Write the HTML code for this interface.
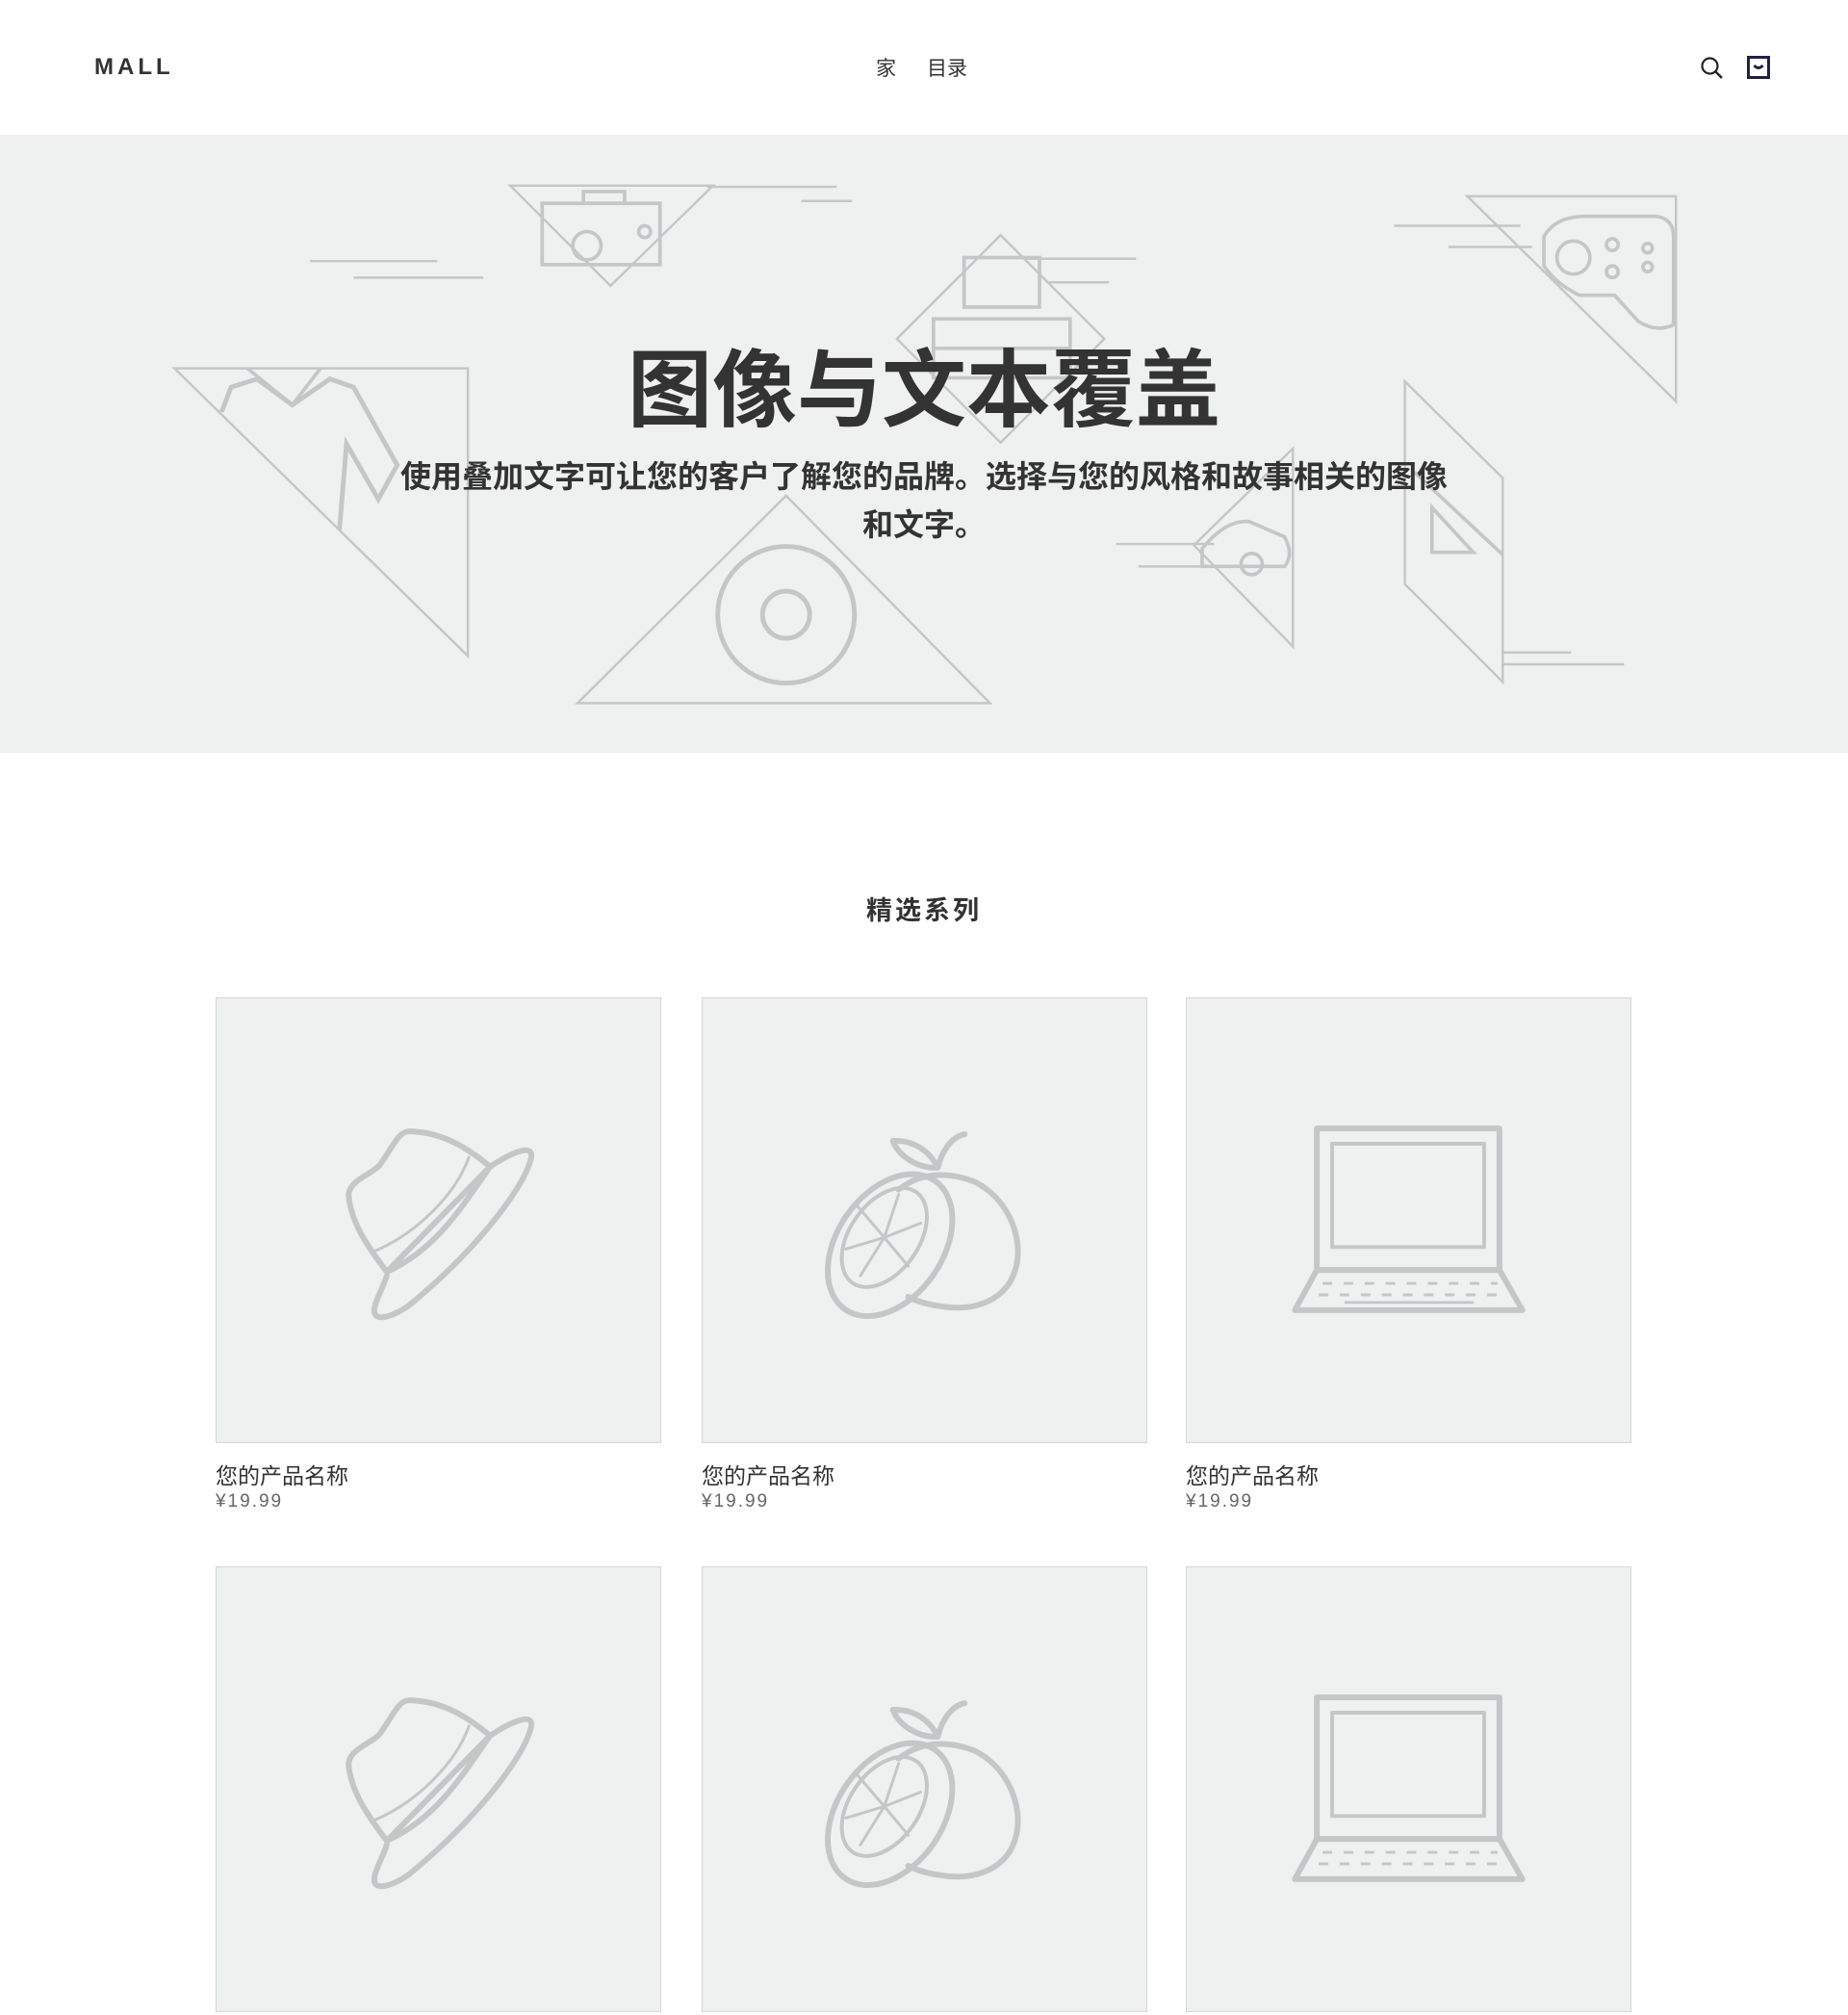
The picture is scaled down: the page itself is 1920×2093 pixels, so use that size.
<!DOCTYPE html>
<html><head><meta charset="utf-8"><style>
*{margin:0;padding:0;box-sizing:border-box}
body{width:1920px;height:1920px;overflow:hidden;background:#fff;font-family:"Liberation Sans","Noto Sans CJK SC",sans-serif;color:#333}
.hdr{height:140px;position:relative}
.logo{position:absolute;left:98px;top:56px;font-size:24px;font-weight:bold;letter-spacing:4px;color:#333}
.nav{position:absolute;left:910px;top:55px;font-size:21px;color:#333}
.nav span{margin-right:32px}
.hero{position:absolute;top:140px;left:0;width:1920px;height:642px;background:#eff0f0}
.hero svg{position:absolute;left:0;top:0}
.ttl{position:absolute;left:0;width:1920px;text-align:center;font-size:88px;font-weight:bold;color:#333;line-height:120px}
.sub{position:absolute;left:410px;width:1100px;text-align:center;font-size:32px;font-weight:bold;color:#333;line-height:50px}
.sec{position:absolute;top:924px;width:1920px;text-align:center;font-size:27px;font-weight:bold;letter-spacing:3px;color:#333}
.card{position:absolute;width:463px}
.img{width:463px;height:463px;background:#eff0f0;border:1.5px solid #d5d6d7}
.nm{font-size:23px;color:#333;margin-top:19px;line-height:30px}
.pr{font-size:19px;color:#666;letter-spacing:2px;line-height:24px}
</style></head><body>
<div class="hdr">
<div class="logo">MALL</div>
<div class="nav"><span>家</span><span>目录</span></div>
<svg style="position:absolute;left:1766px;top:58px" width="26" height="26" viewBox="0 0 26 26"><circle cx="10.5" cy="10.5" r="8" fill="none" stroke="#222" stroke-width="2.2"/><line x1="16.5" y1="16.5" x2="23" y2="23" stroke="#222" stroke-width="2.4"/></svg>
<svg style="position:absolute;left:1815px;top:58px" width="24" height="24" viewBox="0 0 24 24"><rect x="1.5" y="1.5" width="21" height="21" fill="none" stroke="#1c2340" stroke-width="3"/><path d="M7.5 10 Q12 15 16.5 10" fill="none" stroke="#1c2340" stroke-width="3"/></svg>
</div>
<div class="hero">
<svg width="1920" height="642" viewBox="0 114 1568 524" fill="none" stroke="#c5c6c8" stroke-width="2">
<polygon points="433,157 605,157 518,242"/>
<line x1="600" y1="158" x2="710" y2="158"/><line x1="680" y1="170" x2="723" y2="170"/>
<rect x="460" y="172" width="100" height="52" stroke-width="3"/><rect x="495" y="162" width="35" height="10" stroke-width="3"/>
<circle cx="498" cy="208" r="12" stroke-width="3"/><circle cx="547" cy="196" r="5" stroke-width="3"/>
<line x1="263" y1="221" x2="371" y2="221"/><line x1="300" y1="235" x2="410" y2="235"/>
<polygon points="849,199 937,287 849,375 761,287"/>
<line x1="870" y1="219" x2="964" y2="219"/><line x1="890" y1="239" x2="941" y2="239"/>
<rect x="818" y="218" width="64" height="42" stroke-width="3"/><rect x="792" y="270" width="116" height="50" stroke-width="3"/><line x1="792" y1="295" x2="908" y2="295" stroke-width="3"/>
<polygon points="148,312 397,312 397,556"/>
<path d="M188,349 L196,328 L218,321 L248,343 L280,321 L300,328 L337,394 L321,423 L294,376 L288,449" stroke-width="4"/>
<path d="M210,312 L248,343 L272,312" stroke-width="3"/>
<polygon points="1245,166 1422,166 1422,340"/>
<line x1="1183" y1="191" x2="1290" y2="191"/><line x1="1229" y1="209" x2="1300" y2="209"/>
<path d="M1310,200 Q1320,183 1345,183 L1405,183 Q1420,185 1420,200 L1420,275 Q1405,282 1390,272 L1370,250 L1340,250 Q1320,240 1310,225 Z" stroke-width="3"/>
<circle cx="1335" cy="218" r="14" stroke-width="3"/><circle cx="1368" cy="207" r="5" stroke-width="3"/><circle cx="1368" cy="230" r="5" stroke-width="3"/><circle cx="1398" cy="210" r="4" stroke-width="3"/><circle cx="1398" cy="226" r="4" stroke-width="3"/>
<polygon points="667,420 840,596 490,596"/>
<circle cx="667" cy="521" r="58" stroke-width="4"/><circle cx="667" cy="521" r="20" stroke-width="4"/>
<polygon points="1097,380 1097,548 1013,462"/>
<line x1="947" y1="461" x2="1030" y2="461"/><line x1="966" y1="480" x2="1040" y2="480"/>
<path d="M1020,465 Q1040,440 1060,442 L1090,455 Q1098,470 1090,480 L1020,480 Z" stroke-width="3"/><circle cx="1062" cy="478" r="9" stroke-width="3"/>
<polygon points="1192,323 1275,405 1275,578 1192,495"/>
<line x1="1275" y1="553" x2="1333" y2="553"/><line x1="1275" y1="563" x2="1378" y2="563"/>
<path d="M1200,400 L1275,470 M1215,430 L1250,468 L1215,468 Z" stroke-width="3"/>
</svg>
<div class="ttl" style="top:206px">图像与文本覆盖</div>
<div class="sub" style="top:330px">使用叠加文字可让您的客户了解您的品牌。选择与您的风格和故事相关的图像和文字。</div>
</div>
<div class="sec">精选系列</div>

<div class="card" style="left:224px;top:1036px"><div class="img">
<svg width="460" height="460" viewBox="0 0 463 463" fill="none" stroke="#c5c6c8" stroke-width="6" stroke-linecap="round" stroke-linejoin="round"><path d="M286,176 C310,160 335,150 328,170 C320,200 270,265 200,322 C180,335 160,340 166,320 C170,308 175,300 178,290"/><path d="M178,286 C160,262 140,235 138,205 C140,190 160,185 170,175 C185,155 190,138 203,139 C230,140 255,150 286,176 Z"/><path d="M178,286 C230,262 255,220 286,176"/><path d="M166,264 C210,245 250,205 264,166" stroke-width="3"/></svg>
</div><div class="nm">您的产品名称</div><div class="pr">¥19.99</div></div>

<div class="card" style="left:729px;top:1036px"><div class="img">
<svg width="460" height="460" viewBox="0 0 463 463" fill="none" stroke="#c5c6c8" stroke-width="6" stroke-linecap="round" stroke-linejoin="round"><path d="M205,200 C230,180 260,182 285,192 C320,210 335,250 328,280 C320,315 285,328 250,322 C235,320 222,316 215,312"/><ellipse cx="196" cy="258" rx="82" ry="55" transform="rotate(-55 196 258)"/><ellipse cx="190" cy="250" rx="58" ry="36" transform="rotate(-55 190 250)" stroke-width="4"/><path d="M190,250 L205,205 M190,250 L228,235 M190,250 L215,280 M190,250 L165,290 M190,250 L150,262 M190,250 L160,215" stroke-width="3"/><path d="M246,177 C235,155 215,148 199,149 C205,165 225,178 246,177 Z M246,177 C250,160 260,145 274,142"/></svg>
</div><div class="nm">您的产品名称</div><div class="pr">¥19.99</div></div>

<div class="card" style="left:1232px;top:1036px"><div class="img">
<svg width="460" height="460" viewBox="0 0 463 463" fill="none" stroke="#c5c6c8" stroke-width="6" stroke-linejoin="round"><rect x="136" y="136" width="191" height="148"/><rect x="152" y="152" width="159" height="108" stroke-width="4"/><path d="M136,284 L327,284 L351,326 L113,326 Z"/><path d="M142,298 L325,298 M138,310 L330,310" stroke-width="3" stroke-dasharray="10 12"/><line x1="165" y1="318" x2="300" y2="318" stroke-width="3"/></svg>
</div><div class="nm">您的产品名称</div><div class="pr">¥19.99</div></div>

<div class="card" style="left:224px;top:1627px"><div class="img">
<svg width="460" height="460" viewBox="0 0 463 463" fill="none" stroke="#c5c6c8" stroke-width="6" stroke-linecap="round" stroke-linejoin="round"><path d="M286,176 C310,160 335,150 328,170 C320,200 270,265 200,322 C180,335 160,340 166,320 C170,308 175,300 178,290"/><path d="M178,286 C160,262 140,235 138,205 C140,190 160,185 170,175 C185,155 190,138 203,139 C230,140 255,150 286,176 Z"/><path d="M178,286 C230,262 255,220 286,176"/><path d="M166,264 C210,245 250,205 264,166" stroke-width="3"/></svg>
</div></div>
<div class="card" style="left:729px;top:1627px"><div class="img">
<svg width="460" height="460" viewBox="0 0 463 463" fill="none" stroke="#c5c6c8" stroke-width="6" stroke-linecap="round" stroke-linejoin="round"><path d="M205,200 C230,180 260,182 285,192 C320,210 335,250 328,280 C320,315 285,328 250,322 C235,320 222,316 215,312"/><ellipse cx="196" cy="258" rx="82" ry="55" transform="rotate(-55 196 258)"/><ellipse cx="190" cy="250" rx="58" ry="36" transform="rotate(-55 190 250)" stroke-width="4"/><path d="M190,250 L205,205 M190,250 L228,235 M190,250 L215,280 M190,250 L165,290 M190,250 L150,262 M190,250 L160,215" stroke-width="3"/><path d="M246,177 C235,155 215,148 199,149 C205,165 225,178 246,177 Z M246,177 C250,160 260,145 274,142"/></svg>
</div></div>
<div class="card" style="left:1232px;top:1627px"><div class="img">
<svg width="460" height="460" viewBox="0 0 463 463" fill="none" stroke="#c5c6c8" stroke-width="6" stroke-linejoin="round"><rect x="136" y="136" width="191" height="148"/><rect x="152" y="152" width="159" height="108" stroke-width="4"/><path d="M136,284 L327,284 L351,326 L113,326 Z"/><path d="M142,298 L325,298 M138,310 L330,310" stroke-width="3" stroke-dasharray="10 12"/></svg>
</div></div>
</body></html>
